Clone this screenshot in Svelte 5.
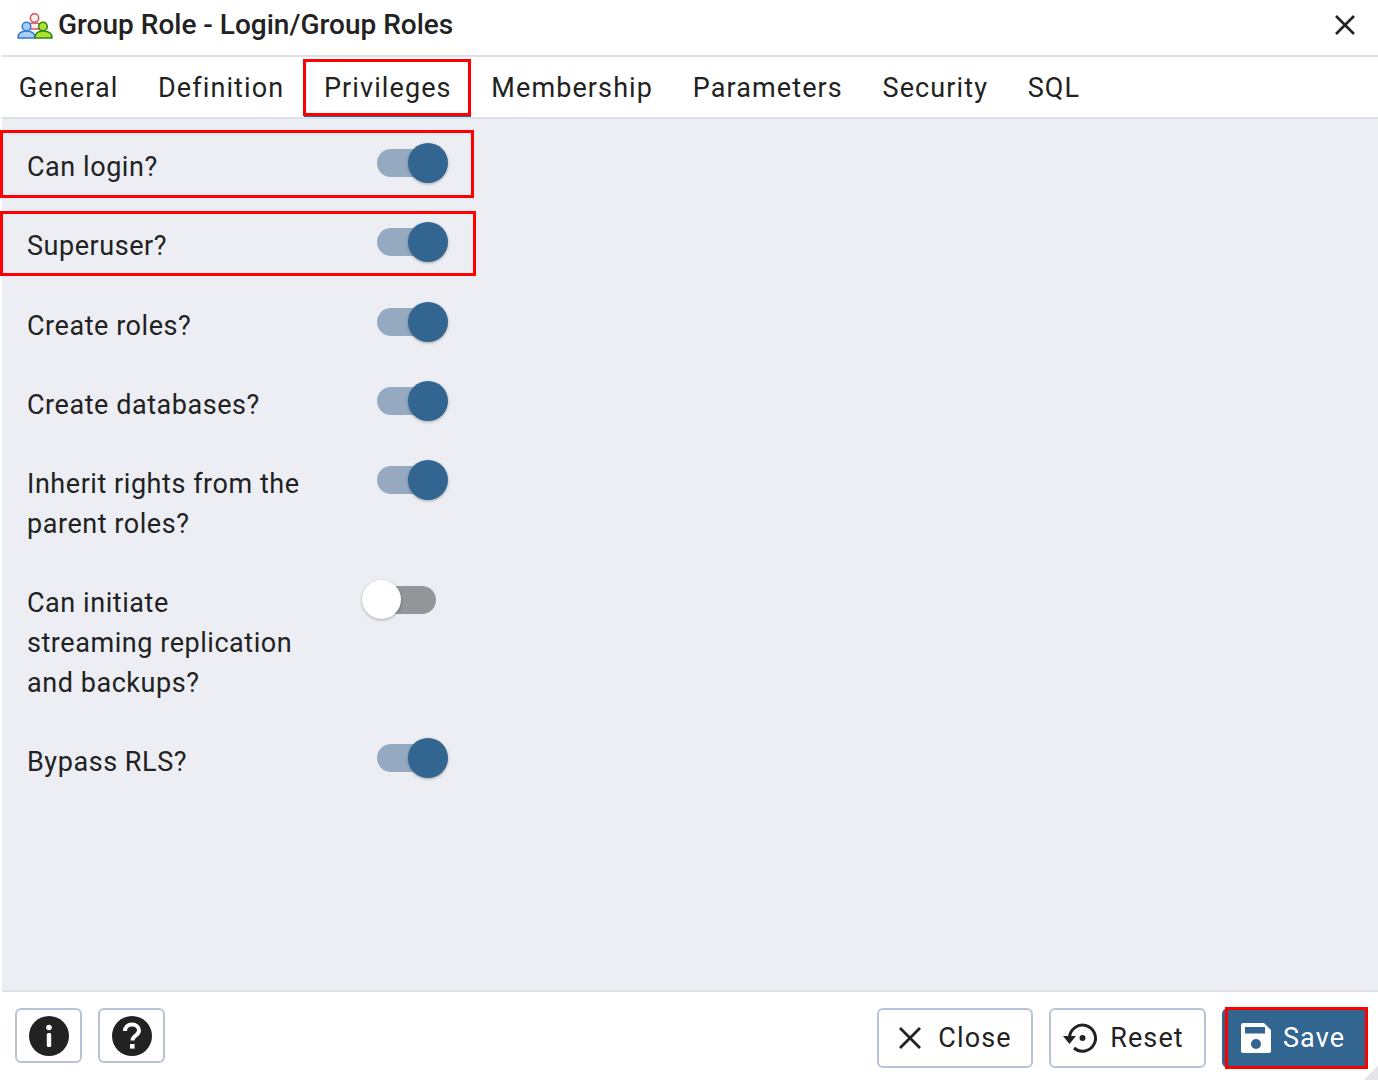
<script>
	const tabs = ['General', 'Definition', 'Privileges', 'Membership', 'Parameters', 'Security', 'SQL'];
	const rows = [
		{ label: 'Can login?', on: true, mark: 'm1' },
		{ label: 'Superuser?', on: true, mark: 'm2' },
		{ label: 'Create roles?', on: true },
		{ label: 'Create databases?', on: true },
		{ label: 'Inherit rights from the parent roles?', on: true },
		{ label: 'Can initiate streaming replication and backups?', on: false },
		{ label: 'Bypass RLS?', on: true }
	];
</script>

<div class="dialog">
	<header class="title">
		<svg class="logo" viewBox="0 0 36 26" width="36" height="26">
			<g stroke-width="1.5" stroke-linejoin="round">
				<circle cx="17.500" cy="5" r="4.200" fill="#fdeeee" stroke="#cf5a58" />
				<path d="M10 15c0-3.500 3-5 7.500-5s7.500 1.500 7.500 5v1H10z" fill="#fdeeee" stroke="#cf5a58" />
				<circle cx="9.500" cy="13.500" r="4.300" fill="#a9cdf3" stroke="#2f7bd0" />
				<path d="M1 25c0-4.500 3-7 8.500-7s8.500 2.500 8.500 7z" fill="#a9cdf3" stroke="#2f7bd0" />
				<circle cx="26" cy="13.500" r="4.300" fill="#aee22e" stroke="#2c861c" />
				<path d="M18 25c0-4.500 2.500-7 8-7s9 2.500 9 7z" fill="#aee22e" stroke="#2c861c" />
			</g>
		</svg>
		<span class="title-text">Group Role - Login/Group Roles</span>
		<svg class="x" viewBox="0 0 24 24" width="24" height="24">
			<path d="M3 3l18 18M21 3L3 21" stroke="#222" stroke-width="2.600" fill="none" />
		</svg>
	</header>

	<nav class="tabs">
		{#each tabs as tab}
			<div class="tab" class:active={tab === 'Privileges'}>
				{tab}
				{#if tab === 'Privileges'}<span class="mark tab-mark"></span>{/if}
			</div>
		{/each}
	</nav>

	<main class="content">
		{#each rows as row}
			<div class="row">
				<div class="label">{row.label}</div>
				<div class="switch" class:off={!row.on}>
					<span class="track"></span>
					<span class="thumb"></span>
				</div>
				{#if row.mark}<span class="mark {row.mark}"></span>{/if}
			</div>
		{/each}
	</main>

	<footer class="footer">
		<div class="group">
			<button class="btn icon-btn" aria-label="Info">
				<svg viewBox="0 0 40 40" width="40" height="40">
					<circle cx="20" cy="20" r="20" fill="#222" />
					<circle cx="20" cy="11.500" r="2.800" fill="#fff" />
					<rect x="17.800" y="17" width="4.400" height="14" rx="1.600" fill="#fff" />
				</svg>
			</button>
			<button class="btn icon-btn" aria-label="Help">
				<svg viewBox="0 0 40 40" width="40" height="40">
					<circle cx="20" cy="20" r="20" fill="#222" />
					<path d="M13 15c0-4 3-6.500 7-6.500s7 2.500 7 6c0 5-6.500 5-6.500 10" fill="none" stroke="#fff" stroke-width="4" />
					<rect x="18" y="28" width="4.600" height="4.600" fill="#fff" />
				</svg>
			</button>
		</div>
		<div class="group right">
			<button class="btn text-btn close">
				<svg viewBox="0 0 24 24" width="24" height="24">
					<path d="M2 2l20 20M22 2L2 22" stroke="#222" stroke-width="2.800" fill="none" />
				</svg>
				Close
			</button>
			<button class="btn text-btn reset">
				<svg viewBox="0 0 36 36" width="36" height="36">
					<path d="M6.500 18a13 13 0 1 1 4.500 10" fill="none" stroke="#222" stroke-width="3" />
					<path d="M0 16h13L6.500 24z" fill="#222" />
					<circle cx="19.500" cy="18" r="3" fill="#222" />
				</svg>
				Reset
			</button>
			<button class="btn text-btn save">
				<svg viewBox="0 0 32 32" width="32" height="32">
					<path d="M3 1h21l7 7v21a2 2 0 0 1-2 2H3a2 2 0 0 1-2-2V3a2 2 0 0 1 2-2z" fill="#fff" />
					<rect x="5" y="5" width="20" height="6.500" fill="#336591" />
					<circle cx="16" cy="22" r="5" fill="#336591" />
				</svg>
				Save
				<span class="mark save-mark"></span>
			</button>
		</div>
	</footer>
	<span class="grip"></span>
</div>

<style>
	:global(body) {
		margin: 0;
		background: #fff;
	}

	.dialog {
		position: relative;
		width: 1378px;
		height: 1080px;
		display: flex;
		flex-direction: column;
		font-family: Roboto, "Liberation Sans", sans-serif;
		color: #222;
		overflow: hidden;
	}

	.title {
		height: 57px;
		flex: none;
		box-sizing: border-box;
		display: flex;
		align-items: center;
		padding: 0 21px 6px 15px;
		border-bottom: 2px solid #dde0e6;
		margin-left: 2px;
	}

	.logo {
		flex: none;
		margin-top: 3px;
	}

	.title-text {
		margin-left: 5px;
		font-size: 28px;
		font-weight: 500;
		flex: 1;
	}

	.tabs {
		height: 62px;
		flex: none;
		box-sizing: border-box;
		display: flex;
		border-bottom: 2px solid #dde0e6;
		margin-left: 2px;
	}

	.tab {
		position: relative;
		padding: 0 19.850px;
		font-size: 27px;
		letter-spacing: 1.100px;
		line-height: 63px;
		box-sizing: border-box;
		height: 60px;
	}

	.tab:first-child {
		margin-left: -3px;
	}

	.tab.active {
		border-bottom: 2px solid #336591;
	}

	.content {
		flex: 1;
		background: #eceef3;
		margin-left: 2px;
		padding: 29px 0 0 25px;
		display: flex;
		flex-direction: column;
		gap: 39.600px;
		min-height: 0;
	}

	.row {
		position: relative;
		display: flex;
		width: 420px;
		align-items: flex-start;
	}

	.label {
		width: 273px;
		font-size: 27px;
		letter-spacing: 0.550px;
		line-height: 39.700px;
	}

	.switch {
		position: absolute;
		left: 347px;
		top: -5px;
		width: 74px;
		height: 40px;
	}

	.track {
		position: absolute;
		left: 3px;
		top: 6px;
		width: 60px;
		height: 28px;
		border-radius: 14px;
		background: #95aac1;
	}

	.thumb {
		position: absolute;
		left: 34px;
		top: 0;
		width: 40px;
		height: 40px;
		border-radius: 50%;
		background: #336591;
		box-shadow: 0 1px 3px rgba(0, 0, 0, 0.3);
	}

	.switch.off {
		left: 335px;
		top: -4px;
	}

	.off .track {
		left: 15px;
		width: 59px;
		background: #949599;
	}

	.off .thumb {
		left: 0;
		width: 39px;
		height: 39px;
		background: #fff;
	}

	.mark {
		position: absolute;
		border: 3px solid #f00;
		box-sizing: border-box;
		pointer-events: none;
	}

	.tab-mark {
		left: -1px;
		top: 2px;
		width: 168px;
		height: 57px;
	}

	.m1 {
		left: -27px;
		top: -18px;
		width: 474px;
		height: 68px;
	}

	.m2 {
		left: -27px;
		top: -16px;
		width: 476px;
		height: 65px;
	}

	.footer {
		height: 90px;
		flex: none;
		box-sizing: border-box;
		border-top: 2px solid #dde0e6;
		margin-left: 2px;
		display: flex;
		justify-content: space-between;
		align-items: flex-start;
		padding: 16px 10px 0 13px;
	}

	.group {
		display: flex;
		gap: 16px;
	}

	.btn {
		position: relative;
		box-sizing: border-box;
		background: #fff;
		border: 2px solid #bac3d4;
		border-radius: 6px;
		display: flex;
		align-items: center;
		justify-content: center;
		font-family: inherit;
		color: #222;
		padding: 0;
	}

	.icon-btn {
		width: 67px;
		height: 55px;
	}

	.text-btn {
		height: 60px;
		font-size: 27px;
		letter-spacing: 1.100px;
	}

	.close {
		width: 156px;
		gap: 16px;
	}

	.reset {
		width: 157px;
		gap: 11px;
		padding-right: 8px;
	}

	.save {
		width: 146px;
		gap: 11px;
		padding-right: 5px;
		background: #336591;
		border-color: #336591;
		color: #fff;
	}

	.save-mark {
		left: 1px;
		top: -3px;
		width: 143px;
		height: 62px;
	}

	.grip {
		position: absolute;
		right: 0;
		bottom: 0;
		width: 14px;
		height: 14px;
		background: linear-gradient(135deg, transparent 50%, #e4e6ea 50%);
	}
</style>
